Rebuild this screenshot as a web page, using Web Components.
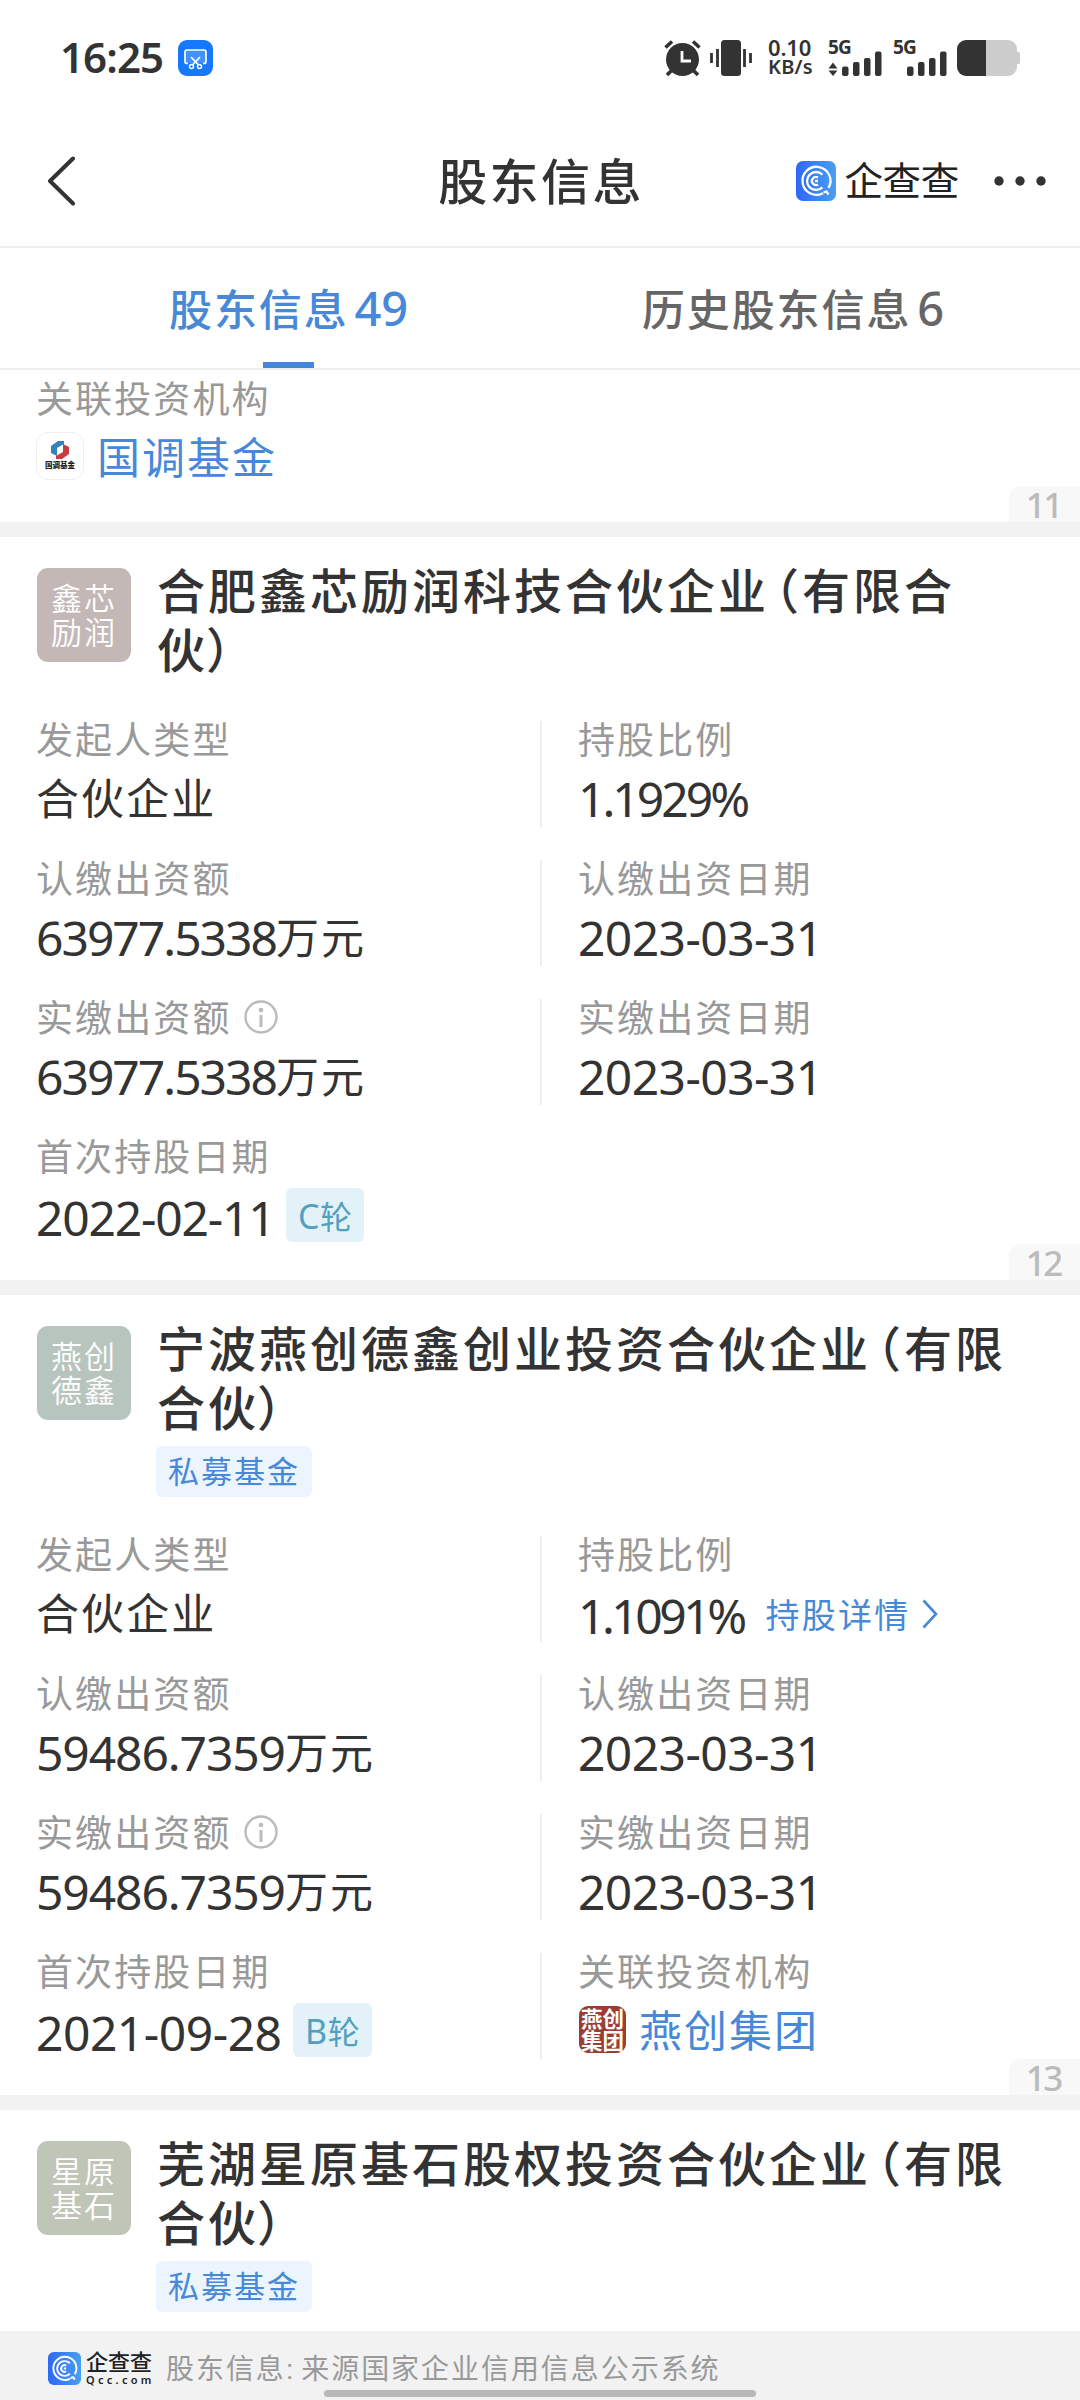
<!DOCTYPE html>
<html lang="zh-CN">
<head>
<meta charset="utf-8">
<title>股东信息</title>
<style>
    html, body { margin: 0; padding: 0; background: #fff; }
    body {
        width: 1080px;
        height: 2400px;
        overflow: hidden;
        color: #333;
        font-family: "Liberation Sans", "Noto Sans CJK SC", sans-serif;
    }
</style>
</head>
<body>
<app-screen>
    <status-bar slot="top" time="16:25"></status-bar>
    <nav-header slot="top">股东信息</nav-header>
    <tab-bar slot="top">
        <tab-item active count="49">股东信息</tab-item>
        <tab-item count="6">历史股东信息</tab-item>
    </tab-bar>

    <holder-card index="11" partial>
        <data-field label="关联投资机构"><org-link logo="guodiao">国调基金</org-link></data-field>
    </holder-card>

    <holder-card index="12" avatar="鑫芯励润" color="#c4b8b6" name="合肥鑫芯励润科技合伙企业（有限合伙）">
        <data-field label="发起人类型">合伙企业</data-field>
        <data-field label="持股比例" right><num-text style="--ls:-3px">1.1929%</num-text></data-field>
        <data-field label="认缴出资额"><num-text style="--ls:-2px">63977.5338</num-text>万元</data-field>
        <data-field label="认缴出资日期" right><num-text>2023-03-31</num-text></data-field>
        <data-field label="实缴出资额" info><num-text style="--ls:-2px">63977.5338</num-text>万元</data-field>
        <data-field label="实缴出资日期" right><num-text>2023-03-31</num-text></data-field>
        <data-field label="首次持股日期" low><num-text style="--ls:-1.2px">2022-02-11</num-text><round-tag letter="C"></round-tag></data-field>
    </holder-card>

    <holder-card index="13" avatar="燕创德鑫" color="#b8c5be" name="宁波燕创德鑫创业投资合伙企业（有限合伙）" tag="私募基金">
        <data-field label="发起人类型">合伙企业</data-field>
        <data-field label="持股比例" right low><num-text style="--ls:-3.5px">1.1091%</num-text><detail-link>持股详情</detail-link></data-field>
        <data-field label="认缴出资额"><num-text style="--ls:-1.1px">59486.7359</num-text>万元</data-field>
        <data-field label="认缴出资日期" right><num-text>2023-03-31</num-text></data-field>
        <data-field label="实缴出资额" info><num-text style="--ls:-1.1px">59486.7359</num-text>万元</data-field>
        <data-field label="实缴出资日期" right><num-text>2023-03-31</num-text></data-field>
        <data-field label="首次持股日期" low><num-text style="--ls:-.5px">2021-09-28</num-text><round-tag letter="B"></round-tag></data-field>
        <data-field label="关联投资机构" right><org-link logo="yanchuang">燕创集团</org-link></data-field>
    </holder-card>

    <holder-card avatar="星原基石" color="#bfc5b7" name="芜湖星原基石股权投资合伙企业（有限合伙）" tag="私募基金"></holder-card>

    <source-footer slot="bottom">股东信息: 来源国家企业信用信息公示系统</source-footer>
</app-screen>

<script>
(function () {
    // Registers an element whose shadow root is built from render(host).
    function define(name, render) {
        customElements.define(name, class extends HTMLElement {
            constructor() {
                super();
                this.attachShadow({mode: 'open'});
            }

            connectedCallback() {
                const tmpl = document.createElement('template');
                tmpl.innerHTML = render(this);
                this.shadowRoot.replaceChildren(tmpl.content.cloneNode(true));
            }
        });
    }

    const attr = (el, name) => el.getAttribute(name) || '';

    define('app-screen', () => `
        <style>
            :host { display: flex; flex-direction: column; width: 1080px; height: 2400px; background: #fff; position: relative; }
            main { flex: 1; min-height: 0; overflow: hidden; }
            .home { position: absolute; left: 324px; bottom: 3px; width: 432px; height: 7px; border-radius: 4px; background: #b8b8b8; }
        </style>
        <slot name="top"></slot>
        <main><slot></slot></main>
        <slot name="bottom"></slot>
        <div class="home"></div>
    `);

    define('status-bar', el => `
        <style>
            :host { display: flex; justify-content: space-between; align-items: center; height: 116px; padding: 0 60px 0 60px; box-sizing: border-box; font-family: "Noto Sans", sans-serif; }
            svg { display: block; }
            .left, .right { display: flex; align-items: center; }
            .time { font-size: 42px; line-height: 56px; padding-bottom: 2px; font-weight: 600; letter-spacing: -.9px; width: 118px; }
            .speed { width: 45px; margin: -3px 0 0 16px; font-size: 22px; line-height: 20px; font-weight: 600; letter-spacing: -.2px; }
            .speed div + div { font-size: 20px; line-height: 19px; letter-spacing: .2px; }
            .sim { position: relative; width: 54px; height: 36px; margin-left: 15px; }
            .sim + .sim { margin-left: 11px; }
            .sim span { position: absolute; left: 0; top: -1px; font-size: 19px; line-height: 16px; font-weight: 700; letter-spacing: -.8px; }
        </style>
        <div class="left">
            <span class="time">${attr(el, 'time')}</span>
            <svg width="35" height="36" viewBox="0 0 35 36" fill="none">
                <rect width="35" height="36" rx="9" fill="#1677ff"/>
                <rect x="7" y="10" width="20.500" height="13" rx="2" fill="#fff" fill-opacity=".2"/>
                <path d="M10 23.500H9a2 2 0 0 1-2-2V12a2 2 0 0 1 2-2h17a2 2 0 0 1 2 2v9.500a2 2 0 0 1-2 2h-1M13 17l7.500 8M22 17l-7.500 8" stroke="#fff" stroke-width="1.700"/>
                <circle cx="13.500" cy="26.500" r="2" stroke="#fff" stroke-width="1.500"/>
                <circle cx="21.500" cy="26.500" r="2" stroke="#fff" stroke-width="1.500"/>
            </svg>
        </div>
        <div class="right">
            <svg width="88" height="36" viewBox="0 0 88 36">
                <circle cx="18.500" cy="19.500" r="16.500" fill="#333"/>
                <path d="M18 11v10h9" fill="none" stroke="#fff" stroke-width="2.800"/>
                <path d="M1.500 7.500 8 1.500M29 1.500l6.500 6M3 35l5-5M34 35l-5-5" stroke="#333" stroke-width="3.600"/>
                <rect x="57" width="20" height="36" rx="3.500" fill="#333"/>
                <path d="M47.500 13v10M53.500 9v18M80.500 9v18M86.500 13v10" stroke="#333" stroke-width="2.800"/>
            </svg>
            <div class="speed"><div>0.10</div><div>KB/s</div></div>
            <div class="sim"><span>5G</span>
                <svg width="54" height="36" viewBox="0 0 54 36" fill="#333">
                    <path d="M5 22.500l4.500 6h-9zM5 36l-4.500-5.500h9z"/>
                    <rect x="14" y="26.500" width="6.500" height="9.500" rx="2"/><rect x="25" y="22" width="6.500" height="14" rx="2"/>
                    <rect x="36" y="18" width="6.500" height="18" rx="2"/><rect x="47" y="11.500" width="6.500" height="24.500" rx="2"/>
                </svg>
            </div>
            <div class="sim"><span>5G</span>
                <svg width="54" height="36" viewBox="0 0 54 36" fill="#333">
                    <rect x="14" y="26.500" width="6.500" height="9.500" rx="2"/><rect x="25" y="22" width="6.500" height="14" rx="2"/>
                    <rect x="36" y="18" width="6.500" height="18" rx="2"/><rect x="47" y="11.500" width="6.500" height="24.500" rx="2"/>
                </svg>
            </div>
            <svg width="63" height="36" viewBox="0 0 63 36" style="margin-left:10px">
                <path d="M10 0h41a9 9 0 0 1 9 9v3h1.500q1.500 0 1.500 2v8q0 2-1.500 2H60v3a9 9 0 0 1-9 9H10z" fill="#ccc"/>
                <path d="M29 0H9a9 9 0 0 0-9 9v18a9 9 0 0 0 9 9h20z" fill="#333"/>
            </svg>
        </div>
    `);

    define('qcc-logo', () => `
        <style>
            :host { display: block; width: 40px; height: 40px; }
            svg { display: block; width: 100%; height: 100%; }
        </style>
        <svg viewBox="0 0 40 40" fill="none">
            <defs><linearGradient id="g"><stop stop-color="#2e68f6"/><stop offset="1" stop-color="#489ff2"/></linearGradient></defs>
            <rect width="40" height="40" rx="7" fill="url(#g)"/>
            <g stroke="#fff" stroke-width="2.300">
                <path d="M32.500 27A14 14 0 1 0 27 32.200M27.500 31.500l3-1 2 3"/>
                <path d="M26.400 13.600A9 9 0 1 0 26.400 26.400"/>
                <path d="M22 16.600A4 4 0 1 0 22 23.400M19 20h3"/>
            </g>
        </svg>
    `);

    define('nav-header', () => `
        <style>
            :host { display: grid; grid-template-columns: 1fr auto 1fr; align-items: center; height: 132px; box-sizing: border-box; padding: 0 34px 0 46px; border-bottom: 2px solid #eee; }
            svg { display: block; }
            h1 { margin: 3px 0 0; font-size: 49px; line-height: 60px; font-weight: 500; letter-spacing: 2.400px; transform: translateX(-5px); }
            .right { display: flex; align-items: center; justify-content: flex-end; }
            .brand { margin: 2px 35px 0 8px; color: #222; font-size: 38.500px; line-height: 48px; font-weight: 400; letter-spacing: -.3px; }
        </style>
        <svg width="30" height="50" viewBox="0 0 30 50"><path d="M27 2.500 4 25l23 22.500" fill="none" stroke="#333" stroke-width="4" stroke-linecap="round" stroke-linejoin="round"/></svg>
        <h1><slot></slot></h1>
        <div class="right">
            <qcc-logo></qcc-logo>
            <span class="brand">企查查</span>
            <svg width="52" height="10" viewBox="0 0 52 10" fill="#333"><circle cx="5" cy="5" r="4.700"/><circle cx="26" cy="5" r="4.700"/><circle cx="47" cy="5" r="4.700"/></svg>
        </div>
    `);

    define('tab-bar', () => `
        <style>
            :host { display: flex; height: 122px; box-sizing: border-box; border-bottom: 2px solid #eee; padding: 0 136px 0 169px; justify-content: space-between; }
        </style>
        <slot></slot>
    `);

    define('tab-item', el => `
        <style>
            :host { display: flex; align-items: center; position: relative; color: #666; font-size: 43px; font-weight: 500; letter-spacing: 1.900px; }
            :host([active]) { color: #4788d8; }
            .text { line-height: 60px; padding-top: 3px; white-space: nowrap; }
            .count { font: 500 47px/60px "Noto Sans", sans-serif; letter-spacing: -.2px; margin-left: 6px; }
            :host([active]) .bar { position: absolute; left: 50%; bottom: 0; width: 51px; height: 6px; margin-left: -25px; background: #4388dc; }
        </style>
        <div class="text"><slot></slot><span class="count">${attr(el, 'count')}</span></div>
        <div class="bar"></div>
    `);

    define('name-avatar', el => `
        <style>
            :host { display: flex; align-items: center; justify-content: center; flex: none; width: 94px; height: 94px; border-radius: 11px; color: #fff; }
            div { width: 68px; padding: 4px 0 0 2px; font-size: 31px; line-height: 34.500px; font-weight: 350; letter-spacing: 2px; word-break: break-all; }
        </style>
        <div>${attr(el, 'text')}</div>
    `);

    define('holder-card', el => {
        // The brackets are set half-width so that the title wraps at the right place.
        const name = attr(el, 'name').replace('（', '<i class="open">（</i>').replace('）', '<i>）</i>');
        const head = `
            <header>
                <name-avatar text="${attr(el, 'avatar')}" style="background:${attr(el, 'color')}"></name-avatar>
                <div>
                    <h2>${name}</h2>
                    ${el.hasAttribute('tag') ? `<span class="tag">${attr(el, 'tag')}</span>` : ''}
                </div>
            </header>`;
        return `
        <style>
            :host { display: block; position: relative; padding: 25px 0 36px; border-bottom: 15px solid #f2f2f2; }
            :host([partial]) { padding-top: 10px; }
            header { display: flex; padding: 0 60px 41px 37px; }
            name-avatar { margin: 6px 25px 0 0; }
            h2 { margin: 0; font-size: 48px; line-height: 59px; font-weight: 500; letter-spacing: 3px; position: relative; top: 1px; left: 1px; }
            i { font-style: normal; font-feature-settings: "halt"; }
            .open { margin-left: 6px; }
            i:not(.open) { margin-left: -2px; }
            .tag { display: block; width: max-content; margin: 8px 0 -2px; padding: 0 12px 0 12px; height: 51px; border-radius: 6px; background: #ecf5fe; color: #4788d8; font-size: 31px; line-height: 54px; letter-spacing: 2px; }
            .grid { display: grid; grid-template-columns: 540px 540px; row-gap: 33px; }
            .index { position: absolute; right: 0; bottom: 0; height: 36px; padding: 0 19px 0 17px; border-radius: 12px 0 0 0; background: #f8f8f8; color: #bbb; font: 500 35px/38px "Noto Sans", sans-serif; letter-spacing: -2.400px; }
        </style>
        ${el.hasAttribute('name') ? head : ''}
        <div class="grid"><slot></slot></div>
        ${el.hasAttribute('index') ? `<div class="index">${attr(el, 'index')}</div>` : ''}`;
    });

    define('data-field', el => `
        <style>
            :host { display: block; height: 106px; box-sizing: border-box; padding-left: 36px; }
            :host([right]) { border-left: 2px solid #eee; }
            .label { display: flex; align-items: center; height: 36px; margin-bottom: 12px; color: #999; font-size: 37px; line-height: 36px; letter-spacing: 2.100px; white-space: nowrap; }
            .label span { position: relative; top: 3px; }
            .label svg { margin-left: 12px; }
            .value { display: flex; align-items: center; height: 58px; font-size: 43px; line-height: 58px; letter-spacing: 2.100px; white-space: nowrap; position: relative; top: 2px; --num-top: -1px; }
            :host([low]) .value { --num-top: 1px; }
        </style>
        <div class="label"><span>${attr(el, 'label')}</span>
            ${el.hasAttribute('info') ? `<svg width="34" height="34" viewBox="0 0 34 34" fill="none" stroke="#bbb" stroke-width="2.400">
                <circle cx="17" cy="17" r="15.500"/><path d="M17 15v12" stroke-width="3"/><circle cx="17" cy="10" r="2.300" fill="#bbb" stroke="none"/>
            </svg>` : ''}
        </div>
        <div class="value"><slot></slot></div>
    `);

    define('num-text', () => `
        <style>
            :host { display: inline-block; font: 400 48px/58px "Noto Sans", sans-serif; letter-spacing: var(--ls, -.600px); }
            span { position: relative; top: var(--num-top, 0); }
        </style>
        <span><slot></slot></span>
    `);

    define('round-tag', el => `
        <style>
            :host { display: block; height: 54px; margin: -4px 0 0 11.500px; padding: 0 11px 0 12px; border-radius: 6px; background: #e3f2f8; color: #539fbf; font-size: 32px; line-height: 56px; letter-spacing: 1px; box-sizing: border-box; }
            span { font: 400 34px/56px "Noto Sans", sans-serif; letter-spacing: .5px; }
        </style>
        <span>${attr(el, 'letter')}</span>轮
    `);

    define('detail-link', () => `
        <style>
            :host { display: flex; align-items: center; gap: 12px; margin-left: 22px; color: #4788d8; font-size: 34px; letter-spacing: 2.200px; }
            span { position: relative; top: 1px; }
        </style>
        <span><slot></slot></span>
        <svg width="16" height="30" viewBox="0 0 16 30" style="margin-top:-2px"><path d="M1.500 1.500 14 15 1.500 28.500" fill="none" stroke="#4788d8" stroke-width="2.600"/></svg>
    `);

    const logos = {
        guodiao: `
            <div class="logo white">
                <svg width="18" height="18" viewBox="0 0 18 18">
                    <path d="M0 5 7 0h6v3L6 7v8L0 12z" fill="#3584b8"/><path d="M18 13l-7 5H5v-3l7-4V3l6 3z" fill="#c93c42"/>
                </svg>
                <b>国调基金</b>
            </div>`,
        yanchuang: `<div class="logo seal"><div>燕创</div><div>集团</div></div>`
    };

    define('org-link', el => `
        <style>
            :host { display: flex; align-items: center; color: #4788d8; letter-spacing: 2px; }
            .logo { display: flex; flex-direction: column; align-items: center; justify-content: center; width: 48px; height: 48px; box-sizing: border-box; margin-right: 13px; letter-spacing: 0; position: relative; top: -3px; }
            .white { border: 1px solid #eee; border-radius: 12px; gap: 2px; }
            .white b { color: #222; font-size: 7.500px; line-height: 10px; font-weight: 900; }
            .seal { width: 47px; height: 47px; padding-top: 3px; background: #9c3d34; border-radius: 9px; color: #fff; font-size: 21.500px; line-height: 22px; font-weight: 700; margin: 0 13px 0 1px; }
        </style>
        ${logos[attr(el, 'logo')]}
        <slot></slot>
    `);

    define('source-footer', () => `
        <style>
            :host { display: flex; align-items: center; height: 69px; box-sizing: border-box; padding: 5px 0 0 48px; background: #f2f2f2; color: #999; font-size: 28px; letter-spacing: 1.950px; }
            qcc-logo { width: 33px; height: 33px; margin-right: 5px; }
            .brand { color: #222; width: 68px; margin-right: 12px; letter-spacing: 0; }
            .brand div { font-size: 22px; line-height: 23px; font-weight: 500; }
            .brand div + div { font: 600 11px/11px "Noto Sans", sans-serif; letter-spacing: 3.300px; }
            p { margin: 0; line-height: 40px; position: relative; top: 2px; white-space: nowrap; word-spacing: -4px; }
        </style>
        <qcc-logo></qcc-logo>
        <div class="brand"><div>企查查</div><div>Qcc.com</div></div>
        <p><slot></slot></p>
    `);
})();
</script>
</body>
</html>
